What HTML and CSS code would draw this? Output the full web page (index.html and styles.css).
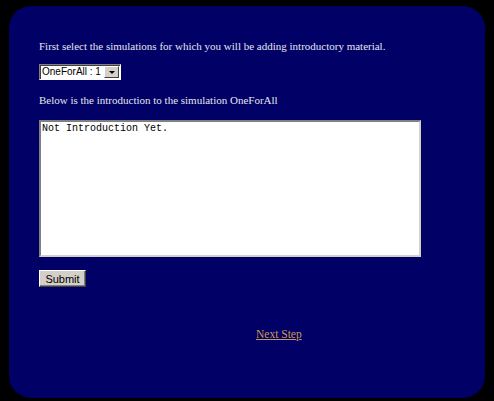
FILE: index.html
```html
<!DOCTYPE html>
<html>
<head>
<meta charset="utf-8">
<link rel="stylesheet" href="styles.css">
</head>
<body>
<div class="panel">
  <p class="line first">First select the simulations for which you will be adding introductory material.</p>
  <div class="select">
    <span class="select-value">OneForAll : 1</span>
    <span class="select-arrow"><span class="tri"></span></span>
  </div>
  <p class="line second">Below is the introduction to the simulation OneForAll</p>
  <textarea class="intro">Not Introduction Yet.</textarea>
  <div class="actions"><button class="submit">Submit</button></div>
  <div class="next"><a href="#" class="next-link">Next Step</a></div>
</div>
</body>
</html>
```

FILE: styles.css
```css
html, body {
  margin: 0;
  padding: 0;
  height: 100%;
}
body {
  background-color: #000;
  background-image:
    radial-gradient(circle, #888 0.6px, transparent 1px),
    radial-gradient(circle, #666 0.6px, transparent 1px),
    radial-gradient(circle, #999 0.6px, transparent 1px);
  background-size: 97px 83px, 131px 59px, 71px 113px;
  background-position: 3px 11px, 40px 5px, 20px 40px;
  overflow: hidden;
}
.panel {
  box-sizing: border-box;
  margin: 6px 0 0 9px;
  width: 476px;
  height: 392px;
  background: #000066;
  border-radius: 22px;
  padding: 33px 30px 0 30px;
  font-family: "Liberation Serif", "Times New Roman", serif;
  font-size: 11px;
  color: #e6e6ee;
}
.line {
  margin: 0;
  line-height: 14px;
}
.select {
  display: inline-flex;
  margin-top: 11px;
  width: 82px;
  height: 16px;
  box-sizing: border-box;
  border-style: solid;
  border-width: 1px;
  border-color: #808080 #fff #fff #808080;
  box-shadow: inset 1px 1px 0 #404040;
  background: #fff;
  font-family: "Liberation Sans", Arial, sans-serif;
  font-size: 10px;
  color: #000;
}
.select-value {
  flex: 1;
  padding-left: 2px;
  line-height: 14px;
  white-space: nowrap;
  overflow: hidden;
}
.select-arrow {
  width: 15px;
  height: 12px;
  margin: 1px 1px 1px 0;
  box-sizing: border-box;
  background: #d4d0c8;
  border-style: solid;
  border-width: 1px;
  border-color: #fff #404040 #404040 #fff;
  display: flex;
  align-items: center;
  justify-content: center;
}
.tri {
  width: 0;
  height: 0;
  border-left: 3px solid transparent;
  border-right: 3px solid transparent;
  border-top: 3px solid #000;
}
.second {
  margin-top: 13px;
}
.intro {
  display: block;
  box-sizing: border-box;
  margin: 13px 0 0 0;
  width: 382px;
  height: 137px;
  padding: 1px 1px;
  border-style: solid;
  border-width: 2px;
  border-color: #808080 #d4d0c8 #d4d0c8 #808080;
  background: #fff;
  font-family: "Liberation Mono", "Courier New", monospace;
  font-size: 10px;
  line-height: 12px;
  color: #000;
  resize: none;
  outline: none;
}
.actions {
  margin-top: 13px;
}
.submit {
  box-sizing: border-box;
  width: 47px;
  height: 17px;
  padding: 0;
  background: #d4d0c8;
  border-style: solid;
  border-width: 1px;
  border-color: #fff #404040 #404040 #fff;
  box-shadow: inset -1px -1px 0 #808080;
  font-family: "Liberation Sans", Arial, sans-serif;
  font-size: 11px;
  color: #000;
}
.next {
  margin-top: 40px;
  padding-left: 217px;
  line-height: 14px;
}
.next-link {
  color: #cc9955;
  font-size: 11.5px;
}
```
